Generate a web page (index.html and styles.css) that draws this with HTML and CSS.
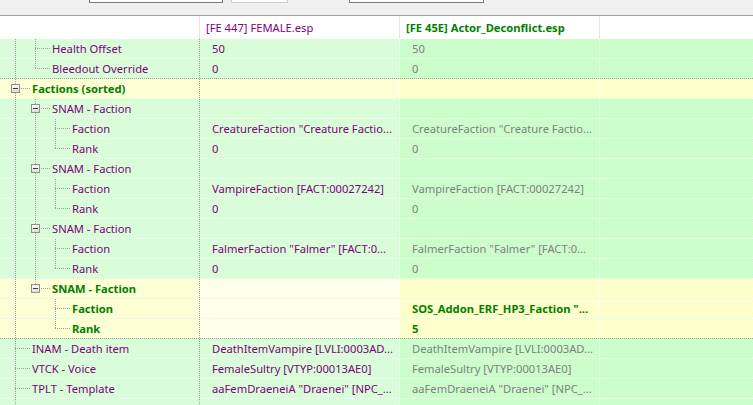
FILE: index.html
```html
<!DOCTYPE html>
<html>
<head>
    <link rel="stylesheet" href="styles.css">
</head>
<body>
    <div class="toolbar">
        <span class="tb-field wide"></span>
        <span class="tb-button"></span>
        <span class="tb-field wider"></span>
    </div>

    <div class="header">
        <div class="hcell"></div>
        <div class="hcell purple">[FE 447] FEMALE.esp</div>
        <div class="hcell green bold">[FE 45E] Actor_Deconflict.esp</div>
        <div class="hcell last"></div>
    </div>

    <div class="tree">
        <!-- end of the config block -->
        <div class="row green">
            <div class="c0"><span class="g line"></span><span class="g tee"></span><span class="label">Health Offset</span></div>
            <div class="c1">50</div>
            <div class="c2">50</div>
            <div class="c3"></div>
        </div>
        <div class="row green sep">
            <div class="c0"><span class="g line"></span><span class="g end"></span><span class="label">Bleedout Override</span></div>
            <div class="c1">0</div>
            <div class="c2">0</div>
            <div class="c3"></div>
        </div>

        <!-- Factions -->
        <div class="row yellow">
            <div class="c0"><span class="g box mid"><i class="pm"></i></span><span class="label strong">Factions (sorted)</span></div>
            <div class="c1"></div>
            <div class="c2"></div>
            <div class="c3"></div>
        </div>

        <div class="row green">
            <div class="c0"><span class="g line"></span><span class="g box mid"><i class="pm"></i></span><span class="label">SNAM - Faction</span></div>
            <div class="c1"></div>
            <div class="c2"></div>
            <div class="c3"></div>
        </div>
        <div class="row green">
            <div class="c0"><span class="g line"></span><span class="g line"></span><span class="g tee"></span><span class="label">Faction</span></div>
            <div class="c1">CreatureFaction "Creature Factio...</div>
            <div class="c2">CreatureFaction "Creature Factio...</div>
            <div class="c3"></div>
        </div>
        <div class="row green">
            <div class="c0"><span class="g line"></span><span class="g line"></span><span class="g end"></span><span class="label">Rank</span></div>
            <div class="c1">0</div>
            <div class="c2">0</div>
            <div class="c3"></div>
        </div>

        <div class="row green">
            <div class="c0"><span class="g line"></span><span class="g box mid"><i class="pm"></i></span><span class="label">SNAM - Faction</span></div>
            <div class="c1"></div>
            <div class="c2"></div>
            <div class="c3"></div>
        </div>
        <div class="row green">
            <div class="c0"><span class="g line"></span><span class="g line"></span><span class="g tee"></span><span class="label">Faction</span></div>
            <div class="c1">VampireFaction [FACT:00027242]</div>
            <div class="c2">VampireFaction [FACT:00027242]</div>
            <div class="c3"></div>
        </div>
        <div class="row green">
            <div class="c0"><span class="g line"></span><span class="g line"></span><span class="g end"></span><span class="label">Rank</span></div>
            <div class="c1">0</div>
            <div class="c2">0</div>
            <div class="c3"></div>
        </div>

        <div class="row green">
            <div class="c0"><span class="g line"></span><span class="g box mid"><i class="pm"></i></span><span class="label">SNAM - Faction</span></div>
            <div class="c1"></div>
            <div class="c2"></div>
            <div class="c3"></div>
        </div>
        <div class="row green">
            <div class="c0"><span class="g line"></span><span class="g line"></span><span class="g tee"></span><span class="label">Faction</span></div>
            <div class="c1">FalmerFaction "Falmer" [FACT:0...</div>
            <div class="c2">FalmerFaction "Falmer" [FACT:0...</div>
            <div class="c3"></div>
        </div>
        <div class="row green">
            <div class="c0"><span class="g line"></span><span class="g line"></span><span class="g end"></span><span class="label">Rank</span></div>
            <div class="c1">0</div>
            <div class="c2">0</div>
            <div class="c3"></div>
        </div>

        <!-- the one that actually conflicts -->
        <div class="row yellow pale">
            <div class="c0"><span class="g line"></span><span class="g box last"><i class="pm"></i></span><span class="label strong">SNAM - Faction</span></div>
            <div class="c1"></div>
            <div class="c2"></div>
            <div class="c3"></div>
        </div>
        <div class="row yellow pale">
            <div class="c0"><span class="g line"></span><span class="g"></span><span class="g tee"></span><span class="label strong">Faction</span></div>
            <div class="c1"></div>
            <div class="c2">SOS_Addon_ERF_HP3_Faction "...</div>
            <div class="c3"></div>
        </div>
        <div class="row yellow pale sep">
            <div class="c0"><span class="g line"></span><span class="g"></span><span class="g end"></span><span class="label strong">Rank</span></div>
            <div class="c1"></div>
            <div class="c2">5</div>
            <div class="c3"></div>
        </div>

        <div class="row green">
            <div class="c0"><span class="g tee"></span><span class="label">INAM - Death item</span></div>
            <div class="c1">DeathItemVampire [LVLI:0003AD...</div>
            <div class="c2">DeathItemVampire [LVLI:0003AD...</div>
            <div class="c3"></div>
        </div>
        <div class="row green">
            <div class="c0"><span class="g tee"></span><span class="label">VTCK - Voice</span></div>
            <div class="c1">FemaleSultry [VTYP:00013AE0]</div>
            <div class="c2">FemaleSultry [VTYP:00013AE0]</div>
            <div class="c3"></div>
        </div>
        <div class="row green">
            <div class="c0"><span class="g tee"></span><span class="label">TPLT - Template</span></div>
            <div class="c1">aaFemDraeneiA "Draenei" [NPC_...</div>
            <div class="c2">aaFemDraeneiA "Draenei" [NPC_...</div>
            <div class="c3"></div>
        </div>
        <div class="row green">
            <div class="c0"><span class="g tee"></span><span class="label">RNAM - Race</span></div>
            <div class="c1">NordRace "Nord" [RACE:00013746]</div>
            <div class="c2">NordRace "Nord" [RACE:00013746]</div>
            <div class="c3"></div>
        </div>
    </div>
</body>
</html>
```

FILE: styles.css
```css
body {
    margin: 0;
    padding: 0;
    background: #ccfecc;
    font-family: "Noto Sans", "Open Sans", sans-serif;
    font-size: 11.2px;
    color: #800080;
    overflow: hidden;
}

/* bottom edge of the filter bar above the grid */
.toolbar {
    height: 16px;
    background: #f0f0f0;
    border-bottom: 1px solid #a0a0a0;
    display: flex;
    align-items: flex-start;
    padding-left: 89px;
    box-sizing: border-box;
}

.tb-field {
    height: 2px;
    background: #fff;
    border: 1px solid #7a7a7a;
    border-top: none;
}

.tb-field.wide {
    width: 132px;
}

.tb-field.wider {
    width: 133px;
}

.tb-button {
    width: 55px;
    height: 2px;
    margin: 0 61px 0 8px;
    background: #fdfdfd;
    border: 1px solid #d0d0d0;
    border-top: none;
}

.header {
    display: grid;
    grid-template-columns: 200px 200px 200px 1fr;
    height: 23px;
    background: #fff;
}

.hcell {
    border-right: 1px solid #e5e5e5;
    padding-left: 6px;
    line-height: 23px;
    white-space: nowrap;
    overflow: hidden;
}

.hcell.last {
    border-right: none;
}

.purple {
    color: #800080;
}

.green {
    color: #008000;
}

.bold {
    font-weight: bold;
}

/* grid rows */
.row {
    display: grid;
    grid-template-columns: 200px 200px 200px 1fr;
    height: 20px;
    box-sizing: border-box;
    border-bottom: 1px dotted #ffffff;
    color: #800080;
}

.row.sep {
    border-bottom-color: #a0a0a0;
}

.row > div {
    height: 19px;
    line-height: 19px;
    white-space: nowrap;
    overflow: hidden;
    text-overflow: ellipsis;
    border-right: 1px dotted #ffffff;
}

.row > .c0 {
    border-right-color: #a0a0a0;
    display: flex;
    padding-left: 5px;
}

.row > .c1,
.row > .c2 {
    padding-left: 12px;
    padding-right: 1px;
}

.row > .c3 {
    border-right: none;
}

.row > .c2 {
    color: #808080;
}

.row.green .c0,
.row.green .c1 {
    background: #d8fdd8;
}

.row.green .c2,
.row.green .c3 {
    background: #ccfecc;
}

.row.yellow .c0,
.row.yellow .c1 {
    background: #ffffd6;
}

.row.yellow.pale .c1 {
    background: #ffffec;
}

.row.yellow .c2,
.row.yellow .c3 {
    background: #ffffcc;
}

.row.yellow .c2 {
    color: #008000;
    font-weight: bold;
}

/* tree guides, 20px per level */
.g {
    flex: none;
    width: 20px;
    height: 19px;
    background-repeat: no-repeat;
    --v: repeating-linear-gradient(to bottom, #a0a0a0 0 1px, transparent 1px 2px);
    --h: repeating-linear-gradient(to right, #a0a0a0 0 1px, transparent 1px 2px);
}

.g.line {
    background-image: var(--v);
    background-size: 1px 19px;
    background-position: 10px 0;
}

.g.tee {
    background-image: var(--v), var(--h);
    background-size: 1px 19px, 10px 1px;
    background-position: 10px 0, 10px 9px;
}

.g.end {
    background-image: var(--v), var(--h);
    background-size: 1px 10px, 10px 1px;
    background-position: 10px 0, 10px 9px;
}

.g.box {
    display: flex;
    align-items: center;
    padding-left: 6px;
    box-sizing: border-box;
}

.g.box.mid {
    background-image: var(--v), var(--h);
    background-size: 1px 19px, 6px 1px;
    background-position: 10px 0, 14px 9px;
}

.g.box.last {
    background-image: var(--v), var(--h);
    background-size: 1px 6px, 6px 1px;
    background-position: 10px 0, 14px 9px;
}

.pm {
    display: block;
    width: 9px;
    height: 9px;
    box-sizing: border-box;
    margin-top: -1px;
    border: 1px solid #8e8f8f;
    background:
        linear-gradient(#3c3c3c, #3c3c3c) center / 5px 1px no-repeat,
        linear-gradient(#ffffff, #dedede);
}

.label {
    padding-left: 7px;
    background-image: repeating-linear-gradient(to right, #a0a0a0 0 1px, transparent 1px 2px);
    background-size: 5px 1px;
    background-position: 0 9px;
    background-repeat: no-repeat;
}

.label.strong {
    color: #008000;
    font-weight: bold;
}
```
